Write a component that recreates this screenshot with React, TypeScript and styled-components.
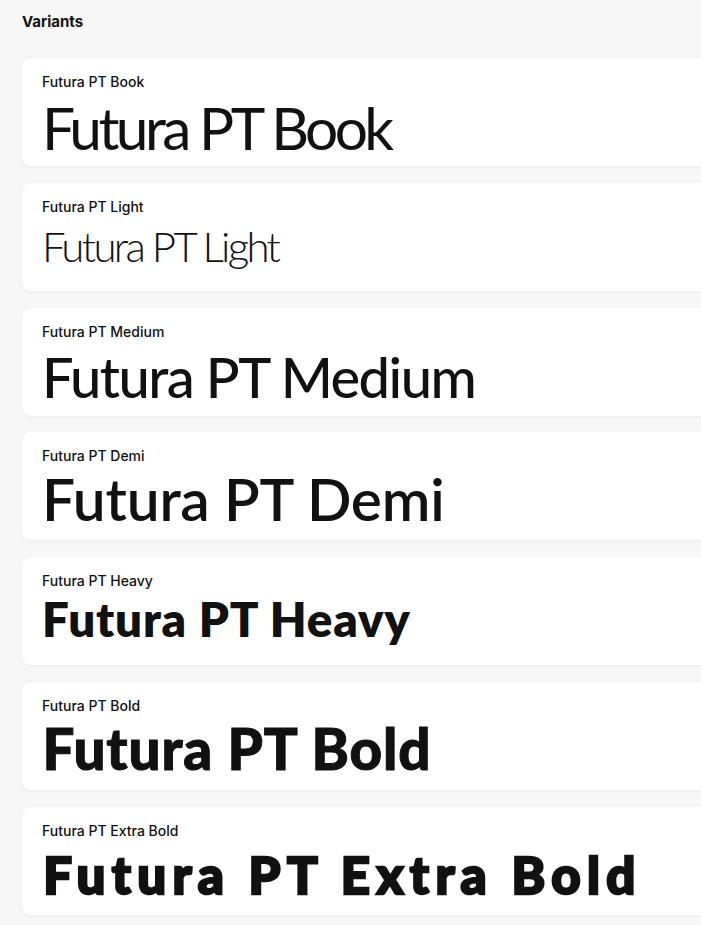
import React from "react";
import styled, { createGlobalStyle } from "styled-components";

const GlobalStyle = createGlobalStyle`
  html, body {
    margin: 0;
    padding: 0;
    background: #f7f7f7;
    overflow-x: hidden;
  }
  body {
    font-family: Inter, "Liberation Sans", sans-serif;
    color: #111111;
  }
`;

const Page = styled.div`
  padding: 11px 0 20px 22px;
  width: 760px;
  box-sizing: border-box;
`;

const Heading = styled.h2`
  margin: 0 0 25px 0;
  font-family: Inter, "Liberation Sans", sans-serif;
  font-size: 15px;
  line-height: 22px;
  font-weight: 700;
  color: #111111;
`;

const List = styled.div`
  display: flex;
  flex-direction: column;
  gap: 16.8px;
`;

const Card = styled.div`
  height: 108px;
  box-sizing: border-box;
  background: #ffffff;
  border-radius: 9px;
  box-shadow: 0 1px 5px rgba(0, 0, 0, 0.045);
  padding: 16px 20px 0 20px;
  overflow: hidden;
`;

const Label = styled.div`
  font-family: Inter, "Liberation Sans", sans-serif;
  font-size: 14px;
  line-height: 16px;
  font-weight: 500;
  color: #111111;
`;

const Sample = styled.div<{
  $size: number;
  $weight: number;
  $spacing: number;
  $offset: number;
  $stroke: number;
}>`
  font-family: Lato, "Noto Sans", sans-serif;
  font-size: ${(p) => p.$size}px;
  font-weight: ${(p) => p.$weight};
  letter-spacing: ${(p) => p.$spacing}px;
  line-height: 1;
  margin-top: ${(p) => p.$offset}px;
  padding-left: ${(p) => p.$stroke / 2}px;
  color: #111111;
  -webkit-text-stroke: ${(p) => p.$stroke}px #111111;
  white-space: nowrap;
`;

const variants = [
  { name: "Futura PT Book", size: 58.6, weight: 400, spacing: -3.6, offset: 8, stroke: 0 },
  { name: "Futura PT Light", size: 42, weight: 300, spacing: -2.7, offset: 10, stroke: 0 },
  { name: "Futura PT Medium", size: 56, weight: 500, spacing: -1.55, offset: 9, stroke: 0 },
  { name: "Futura PT Demi", size: 58.6, weight: 600, spacing: -0.2, offset: 5, stroke: 0 },
  { name: "Futura PT Heavy", size: 47.5, weight: 800, spacing: 0.8, offset: 6, stroke: 0 },
  { name: "Futura PT Bold", size: 56.5, weight: 900, spacing: 0.9, offset: 6.5, stroke: 1 },
  { name: "Futura PT Extra Bold", size: 51, weight: 900, spacing: 6.3, offset: 10.5, stroke: 2.4 },
];

export default function App() {
  return (
    <>
      <GlobalStyle />
      <Page>
        <Heading>Variants</Heading>
        <List>
          {variants.map((v) => (
            <Card key={v.name}>
              <Label>{v.name}</Label>
              <Sample
                $size={v.size}
                $weight={v.weight}
                $spacing={v.spacing}
                $offset={v.offset}
                $stroke={v.stroke}
              >
                {v.name}
              </Sample>
            </Card>
          ))}
        </List>
      </Page>
    </>
  );
}
